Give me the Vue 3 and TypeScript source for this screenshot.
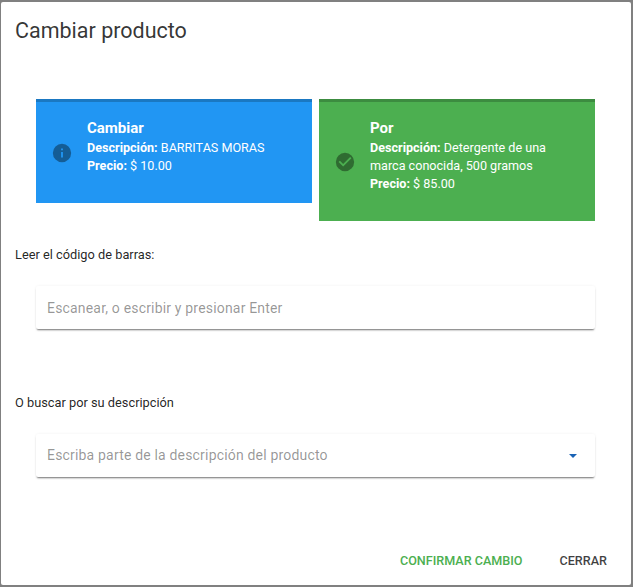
<script setup lang="ts">
interface Card { title: string; desc: string; price: string; kind: string }
const cards: Card[] = [
  { title: 'Cambiar', desc: 'BARRITAS MORAS', price: '$ 10.00', kind: 'info' },
  { title: 'Por', desc: 'Detergente de una marca conocida, 500 gramos', price: '$ 85.00', kind: 'success' },
]
</script>

<template>
  <div class="backdrop">
    <div class="dialog">
      <h2 class="title">Cambiar producto</h2>
      <div class="cards">
        <div v-for="c in cards" :key="c.title" class="alert" :class="c.kind">
          <svg class="icon" viewBox="0 0 24 24" width="24" height="24">
            <path v-if="c.kind === 'info'" d="M13 9h-2V7h2m0 10h-2v-6h2m-1-9A10 10 0 0 0 2 12a10 10 0 0 0 10 10 10 10 0 0 0 10-10A10 10 0 0 0 12 2z" />
            <path v-else d="M12 2a10 10 0 1 0 0 20 10 10 0 0 0 0-20zm-2 15-5-5 1.41-1.41L10 14.17l7.59-7.59L19 8l-9 9z" />
          </svg>
          <div class="body">
            <div class="head">{{ c.title }}</div>
            <div><b>Descripción:</b> {{ c.desc }}</div>
            <div><b>Precio:</b> {{ c.price }}</div>
          </div>
        </div>
      </div>
      <p class="label first">Leer el código de barras:</p>
      <div class="field">
        <span class="ph">Escanear, o escribir y presionar Enter</span>
      </div>
      <p class="label second">O buscar por su descripción</p>
      <div class="field">
        <span class="ph raised">Escriba parte de la descripción del producto</span>
        <span class="caret"></span>
      </div>
      <div class="actions">
        <button class="btn confirm">Confirmar cambio</button>
        <button class="btn close">Cerrar</button>
      </div>
    </div>
  </div>
</template>

<style>
html, body { margin: 0; background: #808080; }
</style>

<style scoped>
.backdrop {
  width: 633px;
  height: 587px;
  box-sizing: border-box;
  padding: 2px 2px 2px 1px;
  background: #808080;
  font-family: Roboto, sans-serif;
}
.dialog {
  height: 100%;
  box-sizing: border-box;
  background: #fff;
  border-radius: 2px;
  display: flex;
  flex-direction: column;
  color: rgba(0, 0, 0, 0.87);
}
.title {
  margin: 0;
  padding: 14px 14px 0;
  font-size: 21.5px;
  font-weight: 400;
  line-height: 30px;
  color: rgba(0, 0, 0, 0.8);
}
.cards {
  display: flex;
  align-items: flex-start;
  gap: 7px;
  margin: 53px 36px 0 35px;
}
.alert {
  flex: 1 1 0;
  display: flex;
  align-items: flex-start;
  box-sizing: border-box;
  padding: 16px;
  border-top: 3px solid rgba(0, 0, 0, 0.2);
  color: #fff;
  font-size: 12.6px;
  line-height: 18px;
}
.info { background: #2196f3; height: 104px; }
.success { background: #4caf50; height: 122px; }
.icon { flex: none; align-self: center; width: 22px; height: 22px; margin: 0 14px 0 -1px; fill: rgba(0, 0, 0, 0.38); }
.head { font-size: 15px; font-weight: 700; line-height: 20px; margin-bottom: 1px; }
.body b { font-weight: 700; }
.label {
  margin: 0;
  padding-left: 14px;
  font-size: 12.8px;
  line-height: 16px;
}
.first { margin-top: 26px; }
.second { margin-top: 66px; }
.field {
  display: flex;
  align-items: center;
  justify-content: space-between;
  box-sizing: border-box;
  height: 43px;
  margin: 23px 36px 0 35px;
  padding: 0 18px 0 11px;
  background: #fff;
  border-radius: 2px;
  box-shadow: 0 2px 2px -1px rgba(0,0,0,0.55), 0 0 3px rgba(0,0,0,0.06);
}
.ph {
  font-size: 14px;
  letter-spacing: 0.18px;
  color: rgba(0, 0, 0, 0.42);
}
.raised { margin-bottom: 2px; }
.caret {
  width: 0;
  height: 0;
  border-left: 4.5px solid transparent;
  border-right: 4.5px solid transparent;
  border-top: 4.5px solid #1a63b5;
}
.actions {
  margin-top: auto;
  display: flex;
  justify-content: flex-end;
  gap: 37px;
  padding: 0 24px 16px 0;
}
.btn {
  border: 0;
  padding: 0;
  background: none;
  font: 500 12.6px/16px Roboto, sans-serif;
  text-transform: uppercase;
}
.close { color: rgba(0, 0, 0, 0.75); }
.confirm { color: #4caf50; }
</style>
